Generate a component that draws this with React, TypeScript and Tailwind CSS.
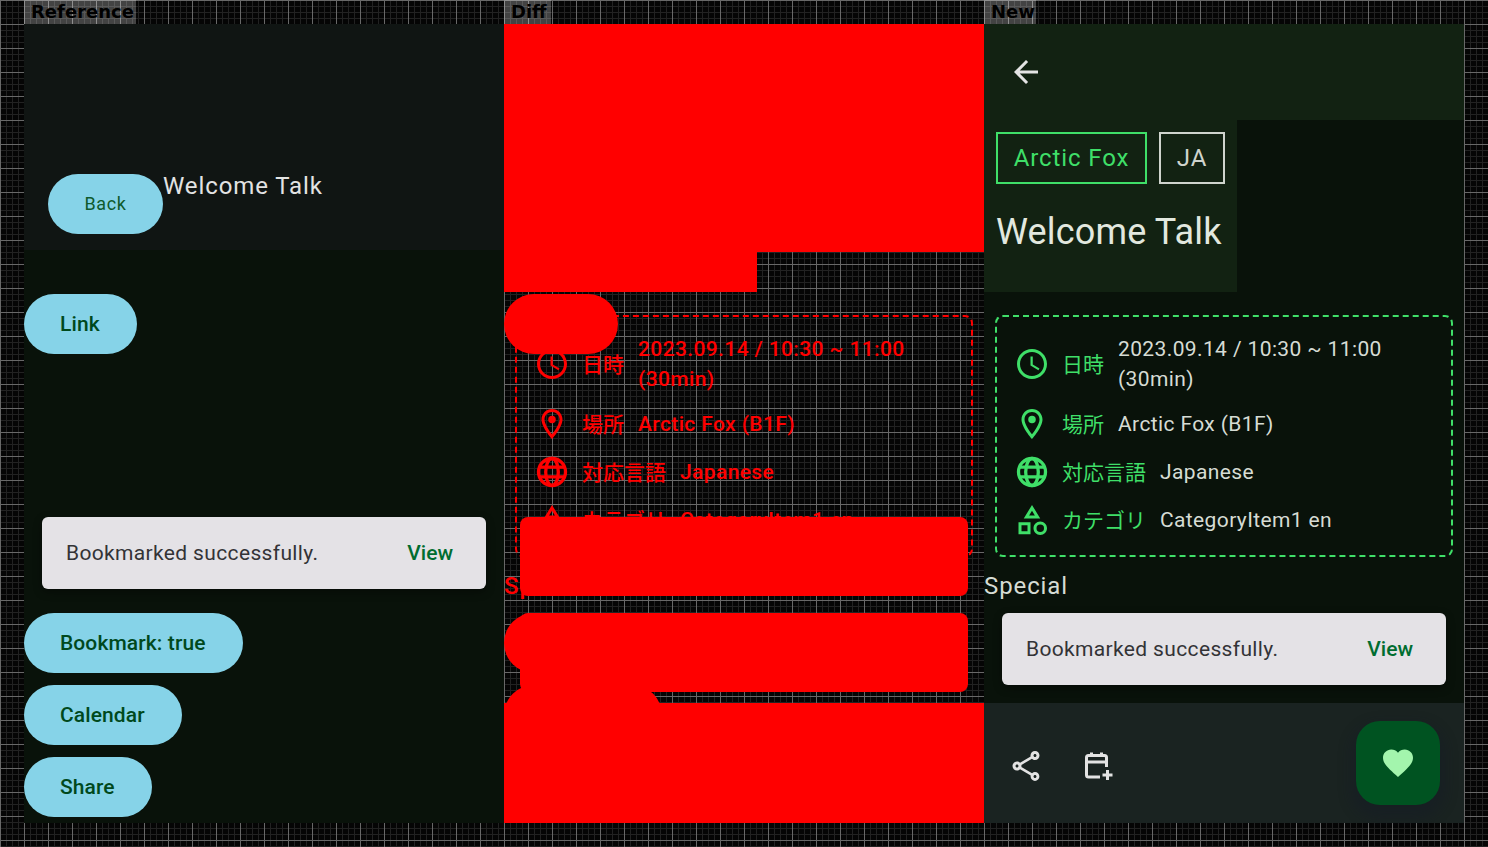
import {
  MdArrowBack,
  MdFavorite,
  MdOutlineCategory,
  MdOutlineLocationOn,
  MdOutlineSchedule,
  MdOutlineShare,
} from 'react-icons/md';
import type { ReactNode } from 'react';

const roboto = "font-['Roboto',sans-serif]";
const cjk = "font-['Roboto','Noto_Sans_CJK_JP',sans-serif]";

function Tab({ label, width }: { label: string; width: string }) {
  return (
    <div className={`h-6 ${width} bg-white/25 pl-[7px] font-['DejaVu_Sans',sans-serif] text-[18px] leading-6 font-bold text-black`}>
      {label}
    </div>
  );
}

function Pill({ label, className = '' }: { label: string; className?: string }) {
  return (
    <div className={`flex h-[60px] w-fit items-center rounded-[30px] bg-[#86d3e8] pt-0.5 pr-[37px] pl-9 text-[21px] font-medium tracking-[0.1px] text-[#00491d] ${className}`}>
      {label}
    </div>
  );
}

function Snackbar() {
  return (
    <div className="flex h-[72px] items-center justify-between rounded-[6px] bg-[#e4e2e6] pt-0.5 pr-[33px] pl-6 text-[21px] tracking-[0.35px] text-[#333336] shadow-[0_3px_8px_rgba(0,0,0,0.4)]">
      <span>Bookmarked successfully.</span>
      <span className="font-medium tracking-normal text-[#006d30]">View</span>
    </div>
  );
}

function GlobeIcon({ className }: { className: string }) {
  return (
    <svg viewBox="0 0 24 24" className={`size-9 fill-none stroke-current ${className}`}>
      <circle cx="12" cy="12" r="9" strokeWidth="2.2" />
      <ellipse cx="12" cy="12" rx="4.2" ry="9" strokeWidth="2.2" />
      <path d="M3.5 8.7H20.5M3.5 15.3H20.5" strokeWidth="2.2" />
    </svg>
  );
}

interface InfoRowProps {
  icon: ReactNode;
  label: string;
  labelClass: string;
  children: ReactNode;
  valueClass: string;
}

function InfoRow({ icon, label, labelClass, children, valueClass }: InfoRowProps) {
  return (
    <div className="flex min-h-9 items-center">
      <span className="mr-3 shrink-0 text-[36px]">{icon}</span>
      <span className={`mr-[14px] shrink-0 pt-1 text-[21px] ${labelClass}`}>{label}</span>
      <span className={`text-[21px] leading-[30px] tracking-[0.38px] ${valueClass}`}>{children}</span>
    </div>
  );
}

function InfoBox({ diff }: { diff: boolean }) {
  const iconColor = diff ? 'text-[#ff0000]' : 'text-[#3fdf68]';
  const labelClass = diff ? 'text-[#ff0000] font-medium' : 'text-[#3fdf68]';
  const valueClass = diff ? 'text-[#ff0000] font-medium' : 'text-[#d6dcd4]';
  return (
    <div
      className={`mx-[11px] mt-[23px] flex h-[242px] flex-col gap-3 rounded-[8px] border-2 border-dashed pt-[17px] pr-4 pl-[17px] ${
        diff ? 'border-[#ff0000]' : 'border-[#3fdf68]'
      } ${cjk}`}
    >
      <InfoRow icon={<MdOutlineSchedule className={iconColor} />} label="日時" labelClass={labelClass} valueClass={valueClass}>
        2023.09.14 / 10:30 ~ 11:00 (30min)
      </InfoRow>
      <InfoRow icon={<MdOutlineLocationOn className={iconColor} />} label="場所" labelClass={labelClass} valueClass={valueClass}>
        Arctic Fox (B1F)
      </InfoRow>
      <InfoRow icon={<GlobeIcon className={iconColor} />} label="対応言語" labelClass={labelClass} valueClass={valueClass}>
        Japanese
      </InfoRow>
      <InfoRow icon={<MdOutlineCategory className={iconColor} />} label="カテゴリ" labelClass={labelClass} valueClass={valueClass}>
        CategoryItem1 en
      </InfoRow>
    </div>
  );
}

function CalendarAddIcon() {
  return (
    <svg viewBox="0 0 36 36" className="size-9 fill-none stroke-[#e3e3e3] stroke-[3]">
      <path d="M25.5 19V9.5a2 2 0 0 0-2-2h-16a2 2 0 0 0-2 2v17.5a2 2 0 0 0 2 2H19" />
      <path d="M5.5 14H25.5M10.5 4.5V8M20.5 4.5V8M26.5 22V32M21.5 27H31.5" />
    </svg>
  );
}

function ReferencePanel() {
  return (
    <div className={`flex h-[799px] w-[480px] flex-col bg-[#09120a] ${roboto}`}>
      <div className="flex h-[226px] items-start bg-[#101513] pt-[150px] pl-6">
        <div className="flex h-[60px] w-[115px] items-center justify-center rounded-[30px] bg-[#86d3e8] pb-0.5 text-[18px] tracking-[0.6px] text-[#0f5a2c]">
          Back
        </div>
        <span className="mt-[-3px] text-[24px] leading-[30px] tracking-[0.9px] text-[#e3e3e3]">Welcome Talk</span>
      </div>
      <Pill label="Link" className="mt-[44px]" />
      <div className="mx-[18px] mt-[163px]">
        <Snackbar />
      </div>
      <Pill label="Bookmark: true" className="mt-6" />
      <Pill label="Calendar" className="mt-3" />
      <Pill label="Share" className="mt-3" />
    </div>
  );
}

function DiffPanel() {
  return (
    <div className={`relative flex h-[799px] w-[480px] flex-col ${roboto}`}>
      <div className="h-[228px] bg-[#ff0000]" />
      <div className="h-10 w-[253px] bg-[#ff0000]" />
      <InfoBox diff />
      <div className="mt-[14px] text-[24px] leading-[30px] font-medium tracking-[0.9px] text-[#ff0000]">Special</div>
      <div className="mt-auto h-[120px] bg-[#ff0000]" />
      {/* shapes that changed sit over the box */}
      <div className="absolute top-[270px] left-0 h-[60px] w-[114px] rounded-[30px] bg-[#ff0000]" />
      <div className="absolute top-[493px] left-4 h-[79px] w-[448px] rounded-[8px] bg-[#ff0000]" />
      <div className="absolute top-[589px] left-4 h-[79px] w-[448px] rounded-[8px] bg-[#ff0000]" />
      <div className="absolute top-[589px] left-0 h-[60px] w-[219px] rounded-[30px] bg-[#ff0000]" />
      <div className="absolute top-[661px] left-0 h-[60px] w-[158px] rounded-[30px] bg-[#ff0000]" />
    </div>
  );
}

function NewPanel() {
  return (
    <div className={`relative flex h-[799px] w-[480px] flex-col bg-[#09120a] ${roboto}`}>
      <div className="flex h-24 items-center bg-[#122212] pl-6">
        <MdArrowBack className="size-9 text-[#e4e4e4]" />
      </div>
      <div className="h-[172px] w-[253px] bg-[#122212] pt-3 pl-3">
        <div className="flex gap-3">
          <div className="flex h-[52px] w-[151px] items-center justify-center border-2 border-[#3fdf68] text-[24px] tracking-[0.9px] text-[#3fdf68]">
            Arctic Fox
          </div>
          <div className="flex h-[52px] w-[66px] items-center justify-center border-2 border-[#cfd4cd] text-[24px] tracking-[0.9px] text-[#cfd4cd]">
            JA
          </div>
        </div>
        <div className="mt-[26px] text-[36px] leading-[44px] tracking-[0.17px] text-[#e2e8df]">Welcome Talk</div>
      </div>
      <InfoBox diff={false} />
      <div className="mt-[14px] text-[24px] leading-[30px] tracking-[0.9px] text-[#d6dcd4]">Special</div>
      <div className="mt-auto flex h-[120px] items-center bg-[#1a2321] pr-6 pl-6">
        <MdOutlineShare className="mt-1.5 size-9 text-[#e3e3e3]" />
        <div className="mt-1.5 ml-[37px]">
          <CalendarAddIcon />
        </div>
        <div className="ml-auto flex size-[84px] items-center justify-center rounded-[24px] bg-[#005321] shadow-[0_8px_12px_6px_rgba(20,25,40,0.35)]">
          <MdFavorite className="size-9 text-[#a3f5ad]" />
        </div>
      </div>
      <div className="absolute top-[589px] right-[18px] left-[18px]">
        <Snackbar />
      </div>
    </div>
  );
}

export default function App() {
  return (
    <div className="h-[847px] w-[1488px] overflow-hidden bg-[#050505] bg-[linear-gradient(to_right,#686868_1px,transparent_1px),linear-gradient(to_bottom,#686868_1px,transparent_1px),linear-gradient(to_right,#222222_1px,transparent_1px),linear-gradient(to_bottom,#222222_1px,transparent_1px)] [background-size:24px_24px,24px_24px,6px_6px,6px_6px] pl-6">
      <div className="flex">
        <div>
          <Tab label="Reference" width="w-[112px]" />
          <ReferencePanel />
        </div>
        <div>
          <Tab label="Diff" width="w-[47px]" />
          <DiffPanel />
        </div>
        <div>
          <Tab label="New" width="w-[52px]" />
          <NewPanel />
        </div>
      </div>
    </div>
  );
}
